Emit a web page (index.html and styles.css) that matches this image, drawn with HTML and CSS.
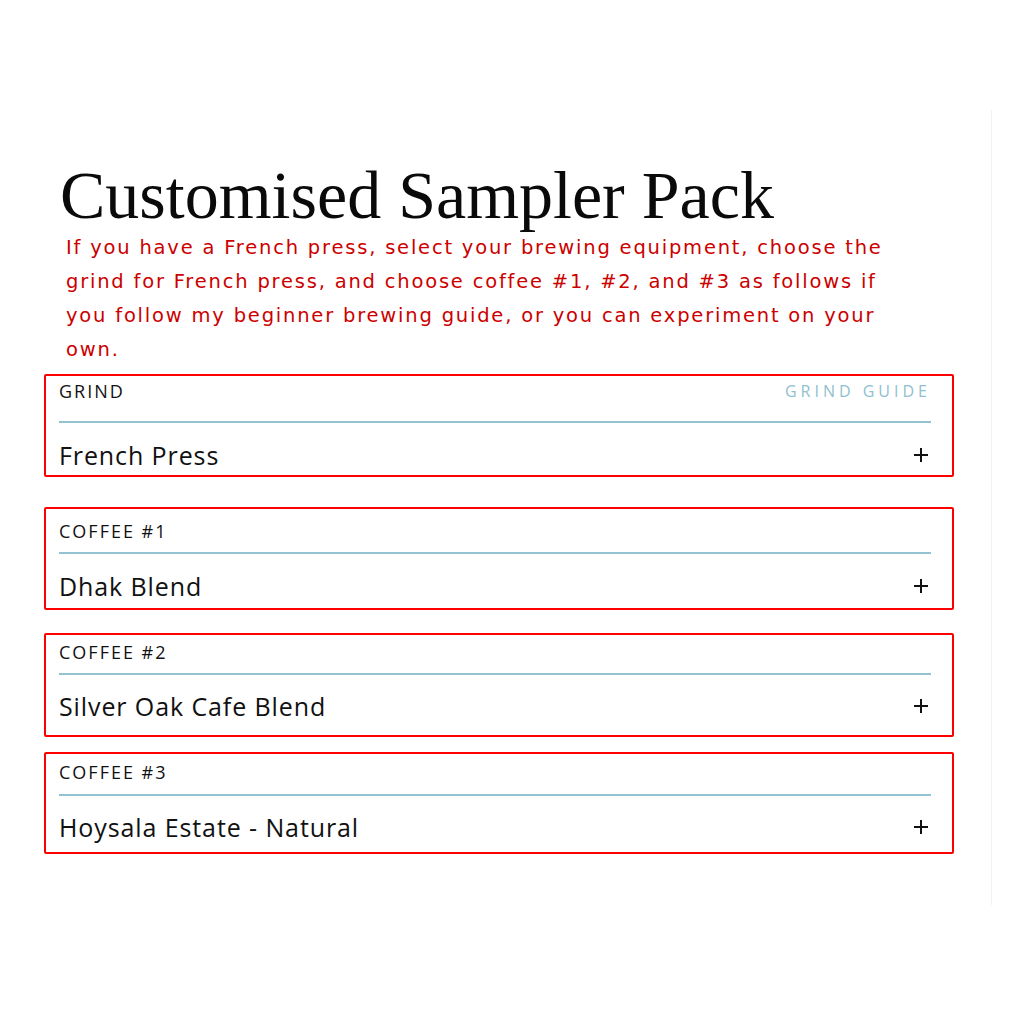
FILE: index.html
```html
<!DOCTYPE html>
<html lang="en">
<head>
<meta charset="utf-8">
<title>Customised Sampler Pack</title>
<link rel="stylesheet" href="styles.css">
</head>
<body>
<div class="page">
  <h1 class="title">Customised Sampler Pack</h1>
  <p class="note">If you have a French press, select your brewing equipment, choose the grind for French press, and choose coffee #1, #2, and #3 as follows if you follow my beginner brewing guide, or you can experiment on your own.</p>

  <div class="option option--a">
    <div class="option-head">
      <span class="option-label">Grind</span>
      <span class="option-guide">Grind Guide</span>
    </div>
    <div class="option-rule"></div>
    <div class="option-value">
      <span>French Press</span>
      <svg class="plus" width="14" height="14" viewBox="0 0 14 14"><path d="M7 0V14M0 7H14" stroke="#111" stroke-width="2"/></svg>
    </div>
  </div>

  <div class="option option--b">
    <div class="option-head">
      <span class="option-label">Coffee #1</span>
    </div>
    <div class="option-rule"></div>
    <div class="option-value">
      <span>Dhak Blend</span>
      <svg class="plus" width="14" height="14" viewBox="0 0 14 14"><path d="M7 0V14M0 7H14" stroke="#111" stroke-width="2"/></svg>
    </div>
  </div>

  <div class="option option--c">
    <div class="option-head">
      <span class="option-label">Coffee #2</span>
    </div>
    <div class="option-rule"></div>
    <div class="option-value">
      <span>Silver Oak Cafe Blend</span>
      <svg class="plus" width="14" height="14" viewBox="0 0 14 14"><path d="M7 0V14M0 7H14" stroke="#111" stroke-width="2"/></svg>
    </div>
  </div>

  <div class="option option--d">
    <div class="option-head">
      <span class="option-label">Coffee #3</span>
    </div>
    <div class="option-rule"></div>
    <div class="option-value">
      <span>Hoysala Estate - Natural</span>
      <svg class="plus" width="14" height="14" viewBox="0 0 14 14"><path d="M7 0V14M0 7H14" stroke="#111" stroke-width="2"/></svg>
    </div>
  </div>
</div>
</body>
</html>
```

FILE: styles.css
```css
html, body {
  margin: 0;
  padding: 0;
  background: #ffffff;
}

.page {
  box-sizing: border-box;
  width: 992px;
  height: 795px;
  margin-top: 110px;
  border-right: 1px solid #f2f2f2;
  display: flex;
  flex-direction: column;
}

.title {
  margin: 51px 0 0 0;
  padding-left: 60px;
  font-family: "Liberation Serif", "Times New Roman", serif;
  font-weight: 400;
  font-size: 68px;
  line-height: 68px;
  color: #0a0a0a;
}

.note {
  box-sizing: border-box;
  margin: 2px 0 0 0;
  padding-left: 66px;
  width: 920px;
  font-family: "DejaVu Sans", sans-serif;
  font-size: 19.5px;
  line-height: 34px;
  letter-spacing: 1.8px;
  color: #cc0000;
}

.option {
  box-sizing: border-box;
  width: 910px;
  margin-left: 44px;
  border: 2px solid #ff0000;
  border-radius: 2px;
  padding: var(--pt) 21px var(--pb) 13px;
  font-family: "Open Sans", sans-serif;
  color: #111111;
}

.option--a { margin-top: 7px;  --pt: 5px;  --g1: 20px; --g2: 19px; --pb: 7px; }
.option--b { margin-top: 30px; --pt: 12px; --g1: 11px; --g2: 19px; --pb: 9px; }
.option--c { margin-top: 23px; --pt: 7px;  --g1: 11px; --g2: 18px; --pb: 16px; }
.option--d { margin-top: 15px; --pt: 8px;  --g1: 12px; --g2: 18px; --pb: 12px; }

.option-head {
  display: flex;
  justify-content: space-between;
  align-items: center;
  height: 20px;
}

.option-label {
  font-size: 18px;
  line-height: 20px;
  text-transform: uppercase;
  letter-spacing: 2px;
}

.option-guide {
  font-size: 16px;
  line-height: 20px;
  text-transform: uppercase;
  letter-spacing: 4px;
  margin-right: 0;
  color: #8fc1d0;
}

.option-rule {
  height: 2px;
  margin-top: var(--g1);
  background: #93c3d1;
}

.option-value {
  margin-top: var(--g2);
  display: flex;
  justify-content: space-between;
  align-items: center;
  height: 26px;
  font-size: 25px;
  line-height: 26px;
  letter-spacing: 0.9px;
}

.plus {
  margin-right: 3px;
  display: block;
}
```
